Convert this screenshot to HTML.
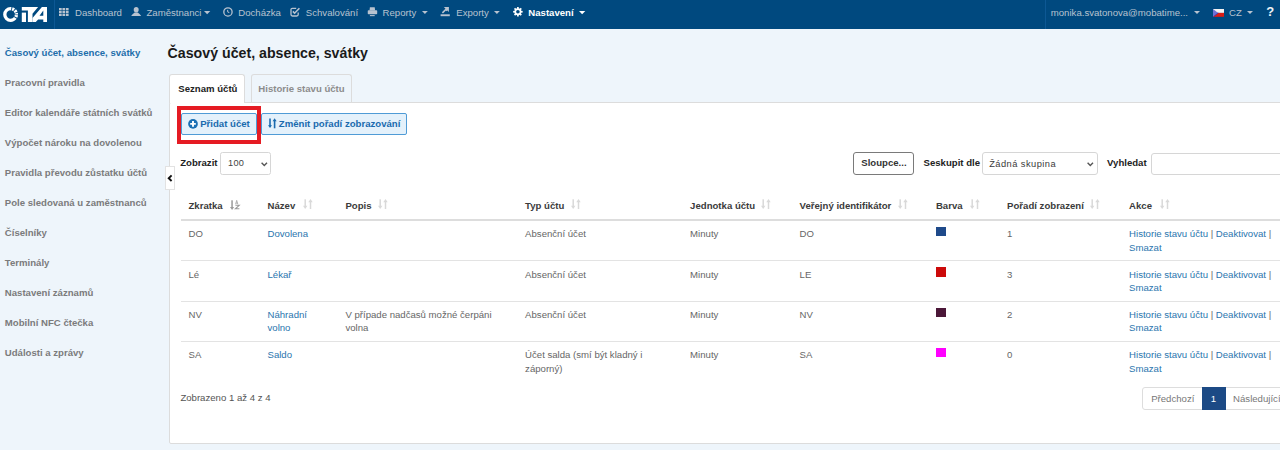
<!DOCTYPE html>
<html><head><meta charset="utf-8">
<style>
*{box-sizing:border-box;margin:0;padding:0}
html,body{width:1280px;height:450px;overflow:hidden;background:#eef5fb;font-family:"Liberation Sans",sans-serif;font-size:9.6px;color:#555}
.a{position:absolute;white-space:nowrap;line-height:9.6px}
.b{font-weight:bold}
#nav{position:absolute;left:0;top:0;width:1280px;height:29px;background:#00497f}
.nt{color:#b8c3d0}
.sb{color:#7b7b7b;font-weight:bold}
.ic{position:absolute}
</style></head><body>
<div id="nav">
  <svg class="ic" style="left:0;top:0" width="54" height="29" viewBox="0 0 54 29">
    <circle cx="10.6" cy="14.5" r="5.8" fill="none" stroke="#fff" stroke-width="3.3" stroke-dasharray="0.000,0.607,2.025,0.911,23.789,0.911,2.025,0.911,2.025,0.911,2.025,0.304"/>
    <g fill="#fff">
      <rect x="21.8" y="12.6" width="4.2" height="9.4"/>
      <path d="M21.8 7 L38.1 7 L32.5 13.8 L32.5 22 L27.9 22 L27.9 10.5 L21.8 10.5Z"/>
      <path d="M32.5 17.9 L41.9 7 L47 7 L47 22 L43.3 22 L43.3 19.4 L38.1 19.4 L35.8 22 L32.5 22Z M39.5 15.7 L43.3 10.5 L43.3 15.7Z" fill-rule="evenodd"/>
    </g>
  </svg>
  <div style="position:absolute;left:54px;top:0;width:1px;height:29px;background:#0d5894"></div>
  <div style="position:absolute;left:1045px;top:0;width:1px;height:29px;background:#0d5894"></div>
  <!-- grid icon -->
  <svg class="ic" style="left:59px;top:7.8px" width="11" height="9" viewBox="0 0 11 9"><g fill="#b8c3d0"><rect x="0.00" y="0.00" width="2.7" height="2.3"/><rect x="3.45" y="0.00" width="2.7" height="2.3"/><rect x="6.90" y="0.00" width="2.7" height="2.3"/><rect x="0.00" y="2.85" width="2.7" height="2.3"/><rect x="3.45" y="2.85" width="2.7" height="2.3"/><rect x="6.90" y="2.85" width="2.7" height="2.3"/><rect x="0.00" y="5.70" width="2.7" height="2.3"/><rect x="3.45" y="5.70" width="2.7" height="2.3"/><rect x="6.90" y="5.70" width="2.7" height="2.3"/></g></svg>
  <div class="a nt" style="left:75px;top:8px">Dashboard</div>
  <!-- user icon -->
  <svg class="ic" style="left:131px;top:7px" width="11" height="10" viewBox="0 0 11 10"><g fill="#b8c3d0"><ellipse cx="5.2" cy="2.75" rx="2.45" ry="2.75"/><path d="M0.2 9.1 C1 7.5 2.6 6.7 3.6 5.6 L6.8 5.6 C7.8 6.7 9.4 7.5 10.2 9.1Z"/></g></svg>
  <div class="a nt" style="left:146.5px;top:8px">Zaměstnanci</div>
  <svg class="ic" style="left:204px;top:10.8px" width="7" height="4" viewBox="0 0 7 4"><path d="M0 0 L6.3 0 L3.15 3.2Z" fill="#b8c3d0"/></svg>
  <!-- clock -->
  <svg class="ic" style="left:222.5px;top:6.6px" width="10" height="10" viewBox="0 0 10 10"><circle cx="4.95" cy="4.95" r="4.15" fill="none" stroke="#b8c3d0" stroke-width="1.3"/><path d="M4.6 2.9 L4.8 5.1 L6.3 5.5" fill="none" stroke="#b8c3d0" stroke-width="1"/></svg>
  <div class="a nt" style="left:238.3px;top:8px">Docházka</div>
  <!-- check -->
  <svg class="ic" style="left:290.2px;top:7px" width="10" height="10" viewBox="0 0 10 10"><path d="M6.2 1.3 L2.4 1.3 Q1 1.3 1 2.7 L1 7.6 Q1 9 2.4 9 L6.8 9 Q8.2 9 8.2 7.6 L8.2 5.4" fill="none" stroke="#b8c3d0" stroke-width="1.3"/><path d="M2.9 4.4 L4.6 6.2 L9.4 1.2" fill="none" stroke="#b8c3d0" stroke-width="1.6"/></svg>
  <div class="a nt" style="left:305.8px;top:8px">Schvalování</div>
  <!-- printer -->
  <svg class="ic" style="left:367px;top:7px" width="11" height="10" viewBox="0 0 11 10"><g fill="#b8c3d0"><path d="M2.9 0.2 L7.7 0.2 L8.1 3.4 L2.5 3.4Z"/><rect x="0.75" y="3.2" width="9.45" height="4" rx="0.8"/><rect x="2.9" y="8.1" width="4.8" height="1.05"/></g></svg>
  <div class="a nt" style="left:382.6px;top:8px">Reporty</div>
  <svg class="ic" style="left:422px;top:10.8px" width="7" height="4" viewBox="0 0 7 4"><path d="M0 0 L5.8 0 L2.9 3Z" fill="#b8c3d0"/></svg>
  <!-- export -->
  <svg class="ic" style="left:440px;top:6px" width="11" height="11" viewBox="0 0 11 11"><g fill="#b8c3d0"><rect x="0.6" y="8.3" width="9.2" height="1.9"/><path d="M3.8 0.9 L8.9 0.9 L8.9 6 L7.3 4.4 L6.1 5.2 L5.3 3.6 L5.4 2.5Z"/></g><path d="M2.4 6.9 L6.2 3.1" stroke="#b8c3d0" stroke-width="1.5"/></svg>
  <div class="a nt" style="left:456.3px;top:8px">Exporty</div>
  <svg class="ic" style="left:494px;top:10.8px" width="7" height="4" viewBox="0 0 7 4"><path d="M0 0 L5.8 0 L2.9 3Z" fill="#b8c3d0"/></svg>
  <!-- gear -->
  <svg class="ic" style="left:512.7px;top:6.9px" width="10" height="10" viewBox="0 0 10 10"><g fill="#fff"><circle cx="4.9" cy="4.75" r="3.5"/><g transform="translate(4.9 4.75)"><rect x="-0.85" y="-4.75" width="1.7" height="9.5"/><rect x="-0.85" y="-4.75" width="1.7" height="9.5" transform="rotate(45)"/><rect x="-0.85" y="-4.75" width="1.7" height="9.5" transform="rotate(90)"/><rect x="-0.85" y="-4.75" width="1.7" height="9.5" transform="rotate(135)"/></g></g><circle cx="4.9" cy="4.75" r="1.8" fill="#00497f"/></svg>
  <div class="a b" style="left:528.3px;top:8px;color:#fff">Nastavení</div>
  <svg class="ic" style="left:578.5px;top:10.8px" width="7" height="4" viewBox="0 0 7 4"><path d="M0 0 L6.3 0 L3.15 3.2Z" fill="#fff"/></svg>

  <div class="a nt" style="left:1050.8px;top:8px">monika.svatonova@mobatime...</div>
  <svg class="ic" style="left:1194px;top:10.8px" width="7" height="4" viewBox="0 0 7 4"><path d="M0 0 L6 0 L3 3Z" fill="#b8c3d0"/></svg>
  <svg class="ic" style="left:1213px;top:8.8px" width="12" height="9" viewBox="0 0 12 9"><rect x="0" y="0" width="11" height="3.9" fill="#f2f2f2"/><rect x="0" y="3.9" width="11" height="3.9" fill="#dc1c14"/><path d="M0 0 L5.2 3.9 L0 7.8Z" fill="#6f72d6"/><path d="M0.6 7.6 L5.2 3.9" stroke="#2630b8" stroke-width="0.7"/></svg>
  <div class="a nt" style="left:1229px;top:8px">CZ</div>
  <svg class="ic" style="left:1247px;top:10.8px" width="7" height="4" viewBox="0 0 7 4"><path d="M0 0 L6 0 L3 3Z" fill="#b8c3d0"/></svg>
  <div class="a b" style="left:1266.2px;top:5px;color:#eef2f6;font-size:13px;line-height:13px">?</div>
</div>

<!-- sidebar -->
<div class="a sb" style="left:4.8px;top:47.5px;color:#1d6eaa">Časový účet, absence, svátky</div>
<div class="a sb" style="left:4.8px;top:77.5px">Pracovní pravidla</div>
<div class="a sb" style="left:4.8px;top:107.5px">Editor kalendáře státních svátků</div>
<div class="a sb" style="left:4.8px;top:137.5px">Výpočet nároku na dovolenou</div>
<div class="a sb" style="left:4.8px;top:167.5px">Pravidla převodu zůstatku účtů</div>
<div class="a sb" style="left:4.8px;top:197.5px">Pole sledovaná u zaměstnanců</div>
<div class="a sb" style="left:4.8px;top:227.5px">Číselníky</div>
<div class="a sb" style="left:4.8px;top:257.5px">Terminály</div>
<div class="a sb" style="left:4.8px;top:287.5px">Nastavení záznamů</div>
<div class="a sb" style="left:4.8px;top:317.5px">Mobilní NFC čtečka</div>
<div class="a sb" style="left:4.8px;top:347.5px">Události a zprávy</div>

<!-- title -->
<div class="a b" style="left:167.6px;top:45.7px;font-size:14.2px;line-height:14.2px;color:#1a1a1a">Časový účet, absence, svátky</div>

<!-- panel -->
<div style="position:absolute;left:169px;top:101.5px;width:1200px;height:342px;background:#fff;border:1px solid #dcdcdc;border-radius:2px"></div>
<!-- tabs -->
<div style="position:absolute;left:169px;top:74px;width:76px;height:29px;background:#fff;border:1px solid #dcdcdc;border-bottom:none;border-radius:3px 3px 0 0"></div>
<div style="position:absolute;left:250.5px;top:74px;width:101px;height:28px;background:#eef5fb;border:1px solid #dcdcdc;border-bottom:none;border-radius:3px 3px 0 0"></div>
<div class="a b" style="left:178.3px;top:83.8px;color:#222">Seznam účtů</div>
<div class="a b" style="left:258.3px;top:83.8px;color:#8c8c8c">Historie stavu účtu</div>

<!-- buttons -->
<div style="position:absolute;left:180.5px;top:113px;width:76.5px;height:22px;background:#e4f1fb;border:1px solid #4f9bd6;border-radius:2px"></div>
<div style="position:absolute;left:260.5px;top:113px;width:146.7px;height:22px;background:#e4f1fb;border:1px solid #4f9bd6;border-radius:2px"></div>
<svg class="ic" style="left:188px;top:119px" width="10" height="10" viewBox="0 0 10 10"><circle cx="5" cy="4.9" r="4.85" fill="#1a6fb4"/><path d="M5 2.1 L5 7.7 M2.2 4.9 L7.8 4.9" stroke="#fff" stroke-width="1.9"/></svg>
<div class="a b" style="left:200.2px;top:119.3px;color:#1a6aae">Přidat účet</div>
<svg class="ic" style="left:267.6px;top:117.9px" width="10" height="11" viewBox="0 0 10 11"><g fill="#1a6aae"><rect x="1.2" y="0.5" width="1.6" height="7.5"/><path d="M0 7.2 L4 7.2 L2 10Z"/><rect x="5.8" y="2.5" width="1.6" height="7.8"/><path d="M4.6 3.3 L8.6 3.3 L6.6 0.3Z"/></g></svg>
<div class="a b" style="left:278.8px;top:119.3px;color:#1a6aae">Změnit pořadí zobrazování</div>
<!-- red box -->
<div style="position:absolute;left:177px;top:106px;width:84px;height:38px;border:4px solid #e51b23"></div>

<!-- controls row -->
<div class="a b" style="left:180.2px;top:158px;color:#222">Zobrazit</div>
<div style="position:absolute;left:220px;top:152px;width:50.5px;height:23px;background:#fff;border:1px solid #d6d6d6;border-radius:2.5px"></div>
<div class="a" style="left:228.1px;top:159.1px;color:#444;font-size:9.2px;line-height:9.2px;letter-spacing:0.25px">100</div>
<svg class="ic" style="left:261px;top:161.6px" width="7" height="5" viewBox="0 0 7 5"><path d="M0.6 0.8 L3.3 3.5 L6 0.8" fill="none" stroke="#555" stroke-width="1.4"/></svg>

<div style="position:absolute;left:853px;top:152px;width:61px;height:23px;background:#fff;border:1.2px solid #7a7a7a;border-radius:3px"></div>
<div class="a b" style="left:861.3px;top:158px;color:#333">Sloupce...</div>
<div class="a b" style="left:923.5px;top:158px;color:#222">Seskupit dle</div>
<div style="position:absolute;left:981.5px;top:152px;width:116.5px;height:23px;background:#fff;border:1px solid #d6d6d6;border-radius:3px"></div>
<div class="a" style="left:989.2px;top:159.9px;color:#3a3a3a;font-size:9.3px;line-height:9.3px;letter-spacing:0.45px">Žádná skupina</div>
<svg class="ic" style="left:1087.3px;top:161.8px" width="7" height="5" viewBox="0 0 7 5"><path d="M0.6 0.8 L3.3 3.5 L6 0.8" fill="none" stroke="#555" stroke-width="1.4"/></svg>
<div class="a b" style="left:1107px;top:158px;color:#222">Vyhledat</div>
<div style="position:absolute;left:1151px;top:152.5px;width:160px;height:22.5px;background:#fff;border:1px solid #d6d6d6;border-radius:3px"></div>

<!-- sidebar toggle -->
<div style="position:absolute;left:165px;top:165.6px;width:10px;height:24.4px;background:#fff;border:1px solid #e2e2e2;border-radius:0"></div>
<svg class="ic" style="left:167px;top:174px" width="6" height="8" viewBox="0 0 6 8"><path d="M4.6 1.4 L1.7 4.2 L4.6 7" fill="none" stroke="#111" stroke-width="1.9"/></svg>

<div id="tbl">
<div class="a b" style="left:188.5px;top:201.17px;color:#3b3b3b">Zkratka</div>
<svg class="ic" style="left:229.6px;top:199.5px" width="11" height="11" viewBox="0 0 11 11"><g fill="#9a9a9a"><rect x="1.3" y="0.3" width="1.5" height="7.5"/><path d="M0 7 L4.1 7 L2.05 10Z"/></g><path d="M5.6 4.2 L6.7 0.4 L7.8 4.2 M6 3 L7.4 3" fill="none" stroke="#a8a8a8" stroke-width="0.9"/><path d="M5.4 5.3 L9.2 5.3 L5.4 8.8 L9.4 8.8" fill="none" stroke="#9a9a9a" stroke-width="1.1"/></svg>
<div class="a b" style="left:267.5px;top:201.17px;color:#3b3b3b">Název</div>
<svg class="ic" style="left:302.7px;top:199.2px" width="11" height="11" viewBox="0 0 11 11"><g fill="#d9d9d9"><rect x="1.45" y="0.3" width="1.5" height="7.2"/><path d="M0 6.8 L4.4 6.8 L2.2 10Z"/><rect x="6.75" y="2.6" width="1.5" height="7.4"/><path d="M5.3 3.3 L9.7 3.3 L7.5 0.1Z"/></g></svg>
<div class="a b" style="left:345.4px;top:201.17px;color:#3b3b3b">Popis</div>
<svg class="ic" style="left:378.3px;top:199.2px" width="11" height="11" viewBox="0 0 11 11"><g fill="#d9d9d9"><rect x="1.45" y="0.3" width="1.5" height="7.2"/><path d="M0 6.8 L4.4 6.8 L2.2 10Z"/><rect x="6.75" y="2.6" width="1.5" height="7.4"/><path d="M5.3 3.3 L9.7 3.3 L7.5 0.1Z"/></g></svg>
<div class="a b" style="left:525.1px;top:201.17px;color:#3b3b3b">Typ účtu</div>
<svg class="ic" style="left:571.3px;top:199.2px" width="11" height="11" viewBox="0 0 11 11"><g fill="#d9d9d9"><rect x="1.45" y="0.3" width="1.5" height="7.2"/><path d="M0 6.8 L4.4 6.8 L2.2 10Z"/><rect x="6.75" y="2.6" width="1.5" height="7.4"/><path d="M5.3 3.3 L9.7 3.3 L7.5 0.1Z"/></g></svg>
<div class="a b" style="left:690.1px;top:201.17px;color:#3b3b3b">Jednotka účtu</div>
<svg class="ic" style="left:761.3px;top:199.2px" width="11" height="11" viewBox="0 0 11 11"><g fill="#d9d9d9"><rect x="1.45" y="0.3" width="1.5" height="7.2"/><path d="M0 6.8 L4.4 6.8 L2.2 10Z"/><rect x="6.75" y="2.6" width="1.5" height="7.4"/><path d="M5.3 3.3 L9.7 3.3 L7.5 0.1Z"/></g></svg>
<div class="a b" style="left:799.6px;top:201.17px;color:#3b3b3b">Veřejný identifikátor</div>
<svg class="ic" style="left:898.3px;top:199.2px" width="11" height="11" viewBox="0 0 11 11"><g fill="#d9d9d9"><rect x="1.45" y="0.3" width="1.5" height="7.2"/><path d="M0 6.8 L4.4 6.8 L2.2 10Z"/><rect x="6.75" y="2.6" width="1.5" height="7.4"/><path d="M5.3 3.3 L9.7 3.3 L7.5 0.1Z"/></g></svg>
<div class="a b" style="left:935.9px;top:201.17px;color:#3b3b3b">Barva</div>
<svg class="ic" style="left:970.3px;top:199.2px" width="11" height="11" viewBox="0 0 11 11"><g fill="#d9d9d9"><rect x="1.45" y="0.3" width="1.5" height="7.2"/><path d="M0 6.8 L4.4 6.8 L2.2 10Z"/><rect x="6.75" y="2.6" width="1.5" height="7.4"/><path d="M5.3 3.3 L9.7 3.3 L7.5 0.1Z"/></g></svg>
<div class="a b" style="left:1007.1px;top:201.17px;color:#3b3b3b">Pořadí zobrazení</div>
<svg class="ic" style="left:1090.3px;top:199.2px" width="11" height="11" viewBox="0 0 11 11"><g fill="#d9d9d9"><rect x="1.45" y="0.3" width="1.5" height="7.2"/><path d="M0 6.8 L4.4 6.8 L2.2 10Z"/><rect x="6.75" y="2.6" width="1.5" height="7.4"/><path d="M5.3 3.3 L9.7 3.3 L7.5 0.1Z"/></g></svg>
<div class="a b" style="left:1129.1px;top:201.17px;color:#3b3b3b">Akce</div>
<svg class="ic" style="left:1159.8999999999999px;top:199.2px" width="11" height="11" viewBox="0 0 11 11"><g fill="#d9d9d9"><rect x="1.45" y="0.3" width="1.5" height="7.2"/><path d="M0 6.8 L4.4 6.8 L2.2 10Z"/><rect x="6.75" y="2.6" width="1.5" height="7.4"/><path d="M5.3 3.3 L9.7 3.3 L7.5 0.1Z"/></g></svg>
<div style="position:absolute;left:181px;top:219px;width:1099px;height:2px;background:#dddddd"></div>
<div style="position:absolute;left:181px;top:260px;width:1099px;height:1px;background:#e3e3e3"></div>
<div style="position:absolute;left:181px;top:300.5px;width:1099px;height:1px;background:#e3e3e3"></div>
<div style="position:absolute;left:181px;top:341px;width:1099px;height:1px;background:#e3e3e3"></div>
<div class="a" style="left:188.5px;top:227.12px;line-height:13.5px;color:#666">DO</div>
<div class="a" style="left:267.5px;top:227.12px;line-height:13.5px;color:#2a75ae">Dovolena</div>
<div class="a" style="left:525.1px;top:227.12px;line-height:13.5px;color:#666">Absenční účet</div>
<div class="a" style="left:690.1px;top:227.12px;line-height:13.5px;color:#666">Minuty</div>
<div class="a" style="left:799.6px;top:227.12px;line-height:13.5px;color:#666">DO</div>
<div style="position:absolute;left:936.2px;top:227.0px;width:9.4px;height:9.4px;background:#1f4a8a"></div>
<div class="a" style="left:1007.1px;top:227.12px;line-height:13.5px;color:#666">1</div>
<div class="a" style="left:1129.1px;top:227.12px;line-height:13.5px;color:#2a75ae"><span>Historie stavu účtu</span> <span style="color:#666">|</span> Deaktivovat <span style="color:#666">|</span><br>Smazat</div>
<div class="a" style="left:188.5px;top:267.52px;line-height:13.5px;color:#666">Lé</div>
<div class="a" style="left:267.5px;top:267.52px;line-height:13.5px;color:#2a75ae">Lékař</div>
<div class="a" style="left:525.1px;top:267.52px;line-height:13.5px;color:#666">Absenční účet</div>
<div class="a" style="left:690.1px;top:267.52px;line-height:13.5px;color:#666">Minuty</div>
<div class="a" style="left:799.6px;top:267.52px;line-height:13.5px;color:#666">LE</div>
<div style="position:absolute;left:936.2px;top:267.4px;width:9.4px;height:9.4px;background:#cc0a0a"></div>
<div class="a" style="left:1007.1px;top:267.52px;line-height:13.5px;color:#666">3</div>
<div class="a" style="left:1129.1px;top:267.52px;line-height:13.5px;color:#2a75ae"><span>Historie stavu účtu</span> <span style="color:#666">|</span> Deaktivovat <span style="color:#666">|</span><br>Smazat</div>
<div class="a" style="left:188.5px;top:307.82px;line-height:13.5px;color:#666">NV</div>
<div class="a" style="left:267.5px;top:307.82px;line-height:13.5px;color:#2a75ae">Náhradní<br>volno</div>
<div class="a" style="left:345.4px;top:307.82px;line-height:13.5px;color:#666">V případe nadčasů možné čerpáni<br>volna</div>
<div class="a" style="left:525.1px;top:307.82px;line-height:13.5px;color:#666">Absenční účet</div>
<div class="a" style="left:690.1px;top:307.82px;line-height:13.5px;color:#666">Minuty</div>
<div class="a" style="left:799.6px;top:307.82px;line-height:13.5px;color:#666">NV</div>
<div style="position:absolute;left:936.2px;top:307.7px;width:9.4px;height:9.4px;background:#4b1738"></div>
<div class="a" style="left:1007.1px;top:307.82px;line-height:13.5px;color:#666">2</div>
<div class="a" style="left:1129.1px;top:307.82px;line-height:13.5px;color:#2a75ae"><span>Historie stavu účtu</span> <span style="color:#666">|</span> Deaktivovat <span style="color:#666">|</span><br>Smazat</div>
<div class="a" style="left:188.5px;top:348.22px;line-height:13.5px;color:#666">SA</div>
<div class="a" style="left:267.5px;top:348.22px;line-height:13.5px;color:#2a75ae">Saldo</div>
<div class="a" style="left:525.1px;top:348.22px;line-height:13.5px;color:#666">Účet salda (smí být kladný i<br>záporný)</div>
<div class="a" style="left:690.1px;top:348.22px;line-height:13.5px;color:#666">Minuty</div>
<div class="a" style="left:799.6px;top:348.22px;line-height:13.5px;color:#666">SA</div>
<div style="position:absolute;left:936.2px;top:348.1px;width:9.4px;height:9.4px;background:#ff00ff"></div>
<div class="a" style="left:1007.1px;top:348.22px;line-height:13.5px;color:#666">0</div>
<div class="a" style="left:1129.1px;top:348.22px;line-height:13.5px;color:#2a75ae"><span>Historie stavu účtu</span> <span style="color:#666">|</span> Deaktivovat <span style="color:#666">|</span><br>Smazat</div>
<div class="a" style="left:180.4px;top:393.07px;color:#555">Zobrazeno 1 až 4 z 4</div>
<div style="position:absolute;left:1142px;top:386.5px;width:61px;height:23px;background:#fff;border:1px solid #dddddd;border-radius:3px 0 0 3px"></div>
<div style="position:absolute;left:1202.3px;top:386.5px;width:23.5px;height:23px;background:#1c4a85"></div>
<div style="position:absolute;left:1225.6px;top:386.5px;width:80px;height:23px;background:#fff;border:1px solid #dddddd;border-left:none"></div>
<div class="a" style="left:1151.2px;top:393.87px;color:#777">Předchozí</div>
<div class="a" style="left:1210.8px;top:393.87px;color:#fff">1</div>
<div class="a" style="left:1233.1px;top:393.87px;color:#777">Následující</div>
</div><!--/tbl-->
</body></html>
